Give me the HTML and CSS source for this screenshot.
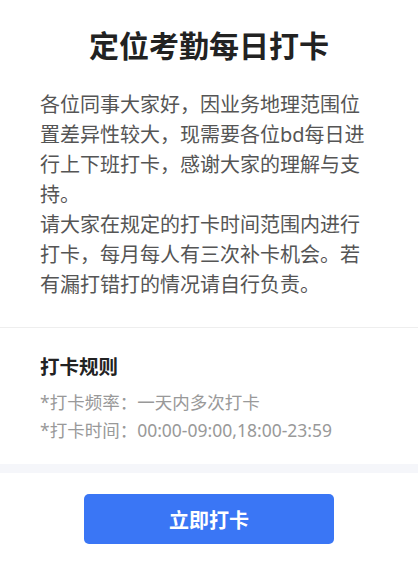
FILE: index.html
```html
<!DOCTYPE html>
<html lang="zh-CN">
<head>
  <meta charset="UTF-8">
  <title>定位考勤每日打卡</title>
  <link rel="stylesheet" href="styles.css">
</head>
<body>

  <!-- 顶部说明 -->
  <div class="intro">
    <h1>定位考勤每日打卡</h1>
    <p class="notice">各位同事大家好，因业务地理范围位置差异性较大，现需要各位bd每日进行上下班打卡，感谢大家的理解与支持。<br>请大家在规定的打卡时间范围内进行打卡，每月每人有三次补卡机会。若有漏打错打的情况请自行负责。</p>
  </div>

  <!-- 打卡规则 -->
  <div class="rules">
    <h3>打卡规则</h3>
    <div class="rule">*打卡频率：一天内多次打卡</div>
    <div class="rule">*打卡时间：00:00-09:00,18:00-23:59</div>
  </div>

  <div class="gap"></div>

  <!-- 按钮 -->
  <div class="actions">
    <button class="punch">立即打卡</button>
  </div>

</body>
</html>
```

FILE: styles.css
```css
body {
  margin: 0;
  background-color: #fff;
  font-family: "Noto Sans", "Noto Sans CJK SC", sans-serif;
  color: #222;
}

.intro {
  padding: 26px 40px 27px;
  border-bottom: 1px solid #eeeeee;
}

.intro h1 {
  margin: 0 0 24px;
  text-align: center;
  font-size: 30px;
  line-height: 40px;
  font-weight: bold;
  color: #222;
}

.notice {
  margin: 0;
  font-size: 20px;
  line-height: 30px;
  color: #555;
}

.rules {
  padding: 25px 40px 20px;
}

.rules h3 {
  margin: 0 0 7px;
  font-size: 19.5px;
  line-height: 28px;
  font-weight: bold;
  color: #222;
}

.rule {
  font-size: 17.5px;
  line-height: 28px;
  color: #999;
}

.gap {
  height: 9px;
  background-color: #f5f6fa;
}

.actions {
  padding-top: 21px;
  text-align: center;
}

.punch {
  width: 250px;
  height: 50px;
  border: none;
  border-radius: 5px;
  background-color: #3a76f5;
  color: #fff;
  font-family: inherit;
  font-size: 20px;
  font-weight: bold;
  cursor: pointer;
}
```
